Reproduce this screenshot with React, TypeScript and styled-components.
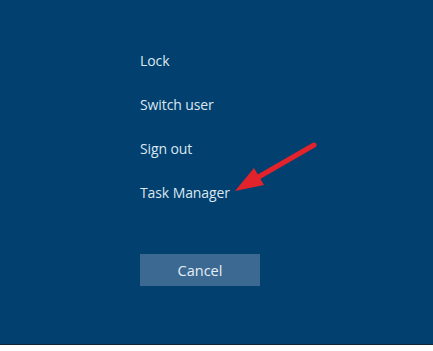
import styled, { createGlobalStyle } from "styled-components";

const Global = createGlobalStyle`
    html, body {
        margin: 0;
        padding: 0;
        background: #ffffff;
    }
`

const Screen = styled.div`
    position: relative;
    width: 433px;
    height: 345px;
    box-sizing: border-box;
    background-color: #01406f;
    border-bottom: 1px solid #14253a;
    padding: 50px 0 0 140px;
    display: flex;
    flex-direction: column;
    font-family: "Open Sans", "Noto Sans", sans-serif;
`
const Menu = styled.div`
    display: flex;
    flex-direction: column;
`
const MenuItem = styled.div`
    height: 44px;
    line-height: 22px;
    font-size: 14px;
    color: #dbe7f1;
    letter-spacing: -0.1px;
    cursor: pointer;
`
const CancelButton = styled.div`
    margin-top: 28px;
    width: 120px;
    height: 32px;
    background-color: #3b6992;
    color: #e6eef5;
    font-size: 14.5px;
    display: flex;
    align-items: center;
    justify-content: center;
    cursor: pointer;
`
const Annotation = styled.svg`
    position: absolute;
    left: 0;
    top: 0;
    pointer-events: none;
`

const items = ["Lock", "Switch user", "Sign out", "Task Manager"];

export default function App(){
    return(
        <>
            <Global/>
            <Screen>
                <Menu>
                    {items.map((label) => <MenuItem key={label}>{label}</MenuItem>)}
                </Menu>
                <CancelButton>Cancel</CancelButton>
                <Annotation width="433" height="345">
                    <line x1="314" y1="145" x2="255" y2="179" stroke="#e3232b" strokeWidth="5" strokeLinecap="round"/>
                    <polygon points="235,191 264,185 254,168" fill="#e3232b"/>
                </Annotation>
            </Screen>
        </>
    )
}
